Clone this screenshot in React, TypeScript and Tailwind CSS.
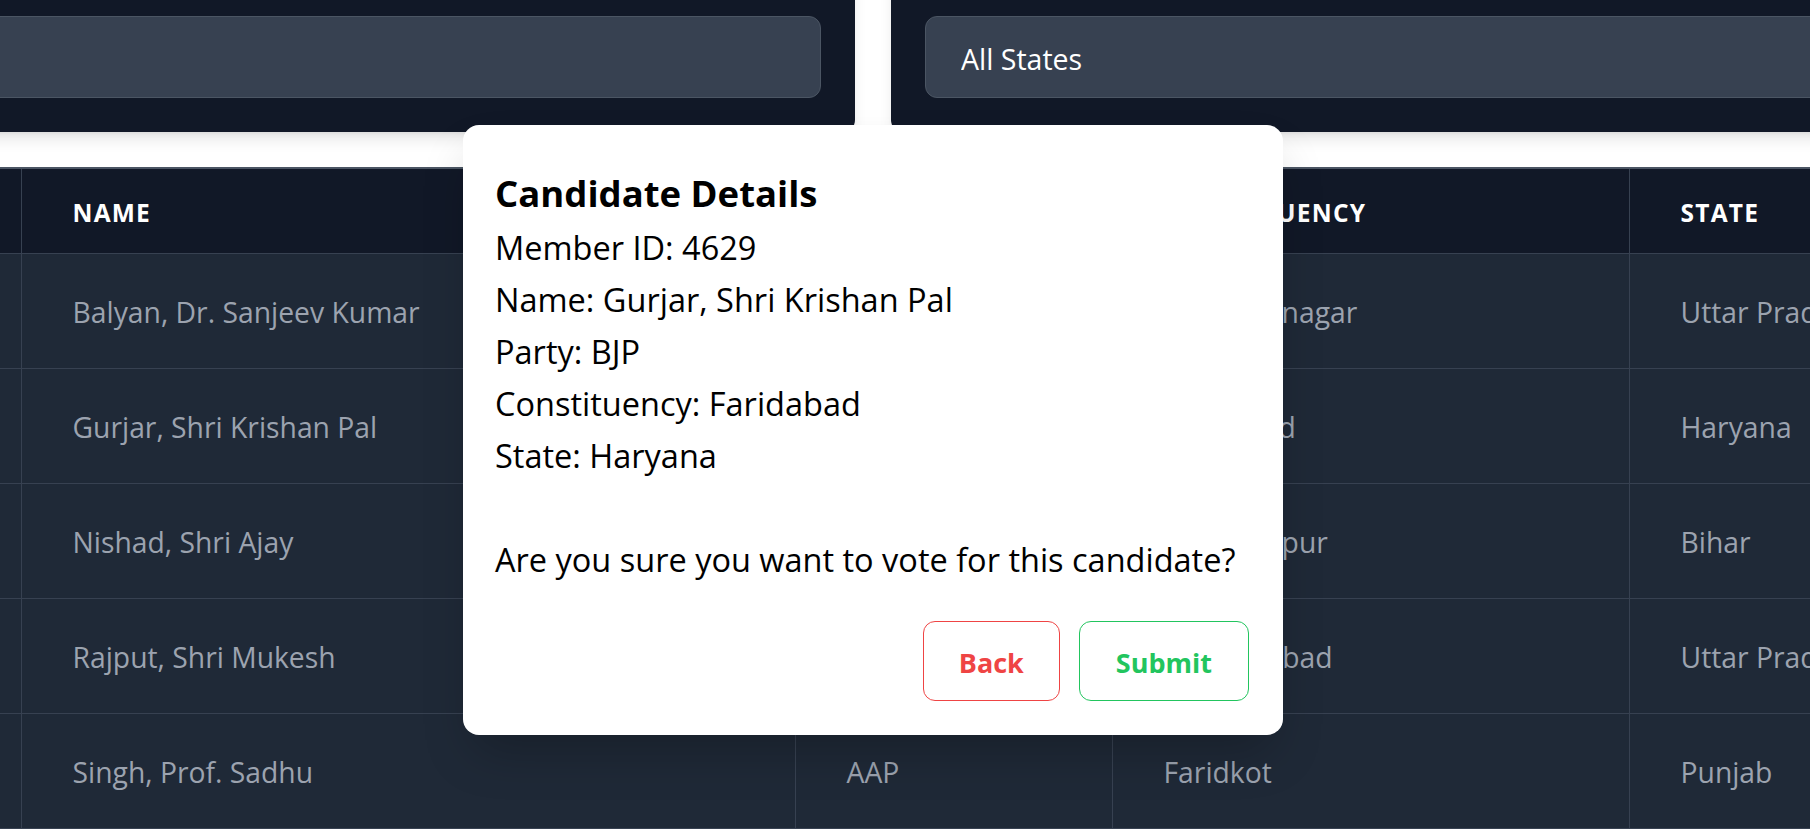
import { useState } from "react";

type Member = {
  id: number;
  name: string;
  party: string;
  constituency: string;
  state: string;
};

const members: Member[] = [
  { id: 4756, name: "Balyan, Dr. Sanjeev Kumar", party: "BJP", constituency: "Muzaffarnagar", state: "Uttar Pradesh" },
  { id: 4629, name: "Gurjar, Shri Krishan Pal", party: "BJP", constituency: "Faridabad", state: "Haryana" },
  { id: 4711, name: "Nishad, Shri Ajay", party: "BJP", constituency: "Muzaffarpur", state: "Bihar" },
  { id: 4750, name: "Rajput, Shri Mukesh", party: "BJP", constituency: "Farrukhabad", state: "Uttar Pradesh" },
  { id: 4698, name: "Singh, Prof. Sadhu", party: "AAP", constituency: "Faridkot", state: "Punjab" },
];

export default function App() {
  const [search, setSearch] = useState("");
  const [stateFilter, setStateFilter] = useState("all");
  const [selected, setSelected] = useState<Member | null>(members[1]);

  const rows = members.filter(
    (m) =>
      m.name.toLowerCase().includes(search.toLowerCase()) &&
      (stateFilter === "all" || m.state === stateFilter)
  );

  return (
    <div className="relative w-[1810px] h-[830px] overflow-hidden bg-white font-['Open_Sans',sans-serif]">
      {/* page is scrolled: content starts above and left of the viewport */}
      <div className="w-[2006px] -mt-[40px] -ml-[130px]">
        {/* Filters */}
        <div className="grid grid-cols-2 gap-[36px]">
          <div className="bg-[#111827] rounded-xl shadow-lg px-[34px] pt-[56px] pb-[34px]">
            <input
              className="w-full h-[82px] rounded-xl bg-[#374151] border border-[#4b5563] px-[34px] text-[28.5px] text-white outline-none"
              value={search}
              onChange={(e) => setSearch(e.target.value)}
            />
          </div>
          <div className="bg-[#111827] rounded-xl shadow-lg px-[34px] pt-[56px] pb-[34px]">
            <select
              className="w-full h-[82px] rounded-xl bg-[#374151] border border-[#4b5563] pl-[35px] pr-[34px] pt-[5px] text-[28.5px] text-white outline-none appearance-none"
              value={stateFilter}
              onChange={(e) => setStateFilter(e.target.value)}
            >
              <option value="all">All States</option>
              <option value="Bihar">Bihar</option>
              <option value="Haryana">Haryana</option>
              <option value="Punjab">Punjab</option>
              <option value="Uttar Pradesh">Uttar Pradesh</option>
            </select>
          </div>
        </div>

        {/* Members table */}
        <table className="mt-[35px] w-full table-fixed border-collapse border-t-2 border-[#4b5563]">
          <colgroup>
            <col className="w-[151px]" />
            <col className="w-[774px]" />
            <col className="w-[317px]" />
            <col className="w-[517px]" />
            <col />
          </colgroup>
          <thead className="bg-[#111827]">
            <tr className="border-b border-[#374151]">
              {["ID", "Name", "Party", "Constituency", "State"].map((h) => (
                <th
                  key={h}
                  className="h-[85px] pl-[51px] pt-[5px] text-left text-[24.5px] font-bold uppercase tracking-wider text-white border-r border-[#374151] whitespace-nowrap"
                >
                  {h}
                </th>
              ))}
            </tr>
          </thead>
          <tbody className="bg-[#1f2937]">
            {rows.map((m) => (
              <tr
                key={m.id}
                className="border-b border-[#374151] cursor-pointer"
                onClick={() => setSelected(m)}
              >
                <td className="h-[115px] pl-[51px] pt-[4px] text-[28.3px] text-[#9ca3af] border-r border-[#374151] whitespace-nowrap">{m.id}</td>
                <td className="h-[115px] pl-[51px] pt-[4px] text-[28.3px] text-[#9ca3af] border-r border-[#374151] whitespace-nowrap">{m.name}</td>
                <td className="h-[115px] pl-[51px] pt-[4px] text-[28.3px] text-[#9ca3af] border-r border-[#374151] whitespace-nowrap">{m.party}</td>
                <td className="h-[115px] pl-[51px] pt-[4px] text-[28.3px] text-[#9ca3af] border-r border-[#374151] whitespace-nowrap">{m.constituency}</td>
                <td className="h-[115px] pl-[51px] pt-[4px] text-[28.3px] text-[#9ca3af] whitespace-nowrap">{m.state}</td>
              </tr>
            ))}
          </tbody>
        </table>
      </div>

      {/* Confirm dialog */}
      {selected && (
        <div className="absolute left-[463px] top-[125px] w-[820px] bg-white rounded-2xl shadow-2xl pl-8 pr-[34px] pt-[42px] pb-[34px] text-black">
          <h2 className="text-[36.5px] leading-[52px] font-bold mb-[3px]">Candidate Details</h2>
          <div className="text-[32.5px] leading-[52px]">
            <p>Member ID: {selected.id}</p>
            <p>Name: {selected.name}</p>
            <p>Party: {selected.party}</p>
            <p>Constituency: {selected.constituency}</p>
            <p>State: {selected.state}</p>
            <p>&nbsp;</p>
            <p>Are you sure you want to vote for this candidate?</p>
          </div>
          <div className="mt-[35px] flex justify-end gap-[19px]">
            <button
              className="h-[80px] px-[35px] pt-[4px] rounded-xl border-[1.5px] border-[#ef4444] text-[#ef4444] text-[27px] font-bold"
              onClick={() => setSelected(null)}
            >
              Back
            </button>
            <button className="h-[80px] px-9 pt-[4px] rounded-xl border-[1.5px] border-[#22c55e] text-[#22c55e] text-[27px] font-bold">
              Submit
            </button>
          </div>
        </div>
      )}
    </div>
  );
}
